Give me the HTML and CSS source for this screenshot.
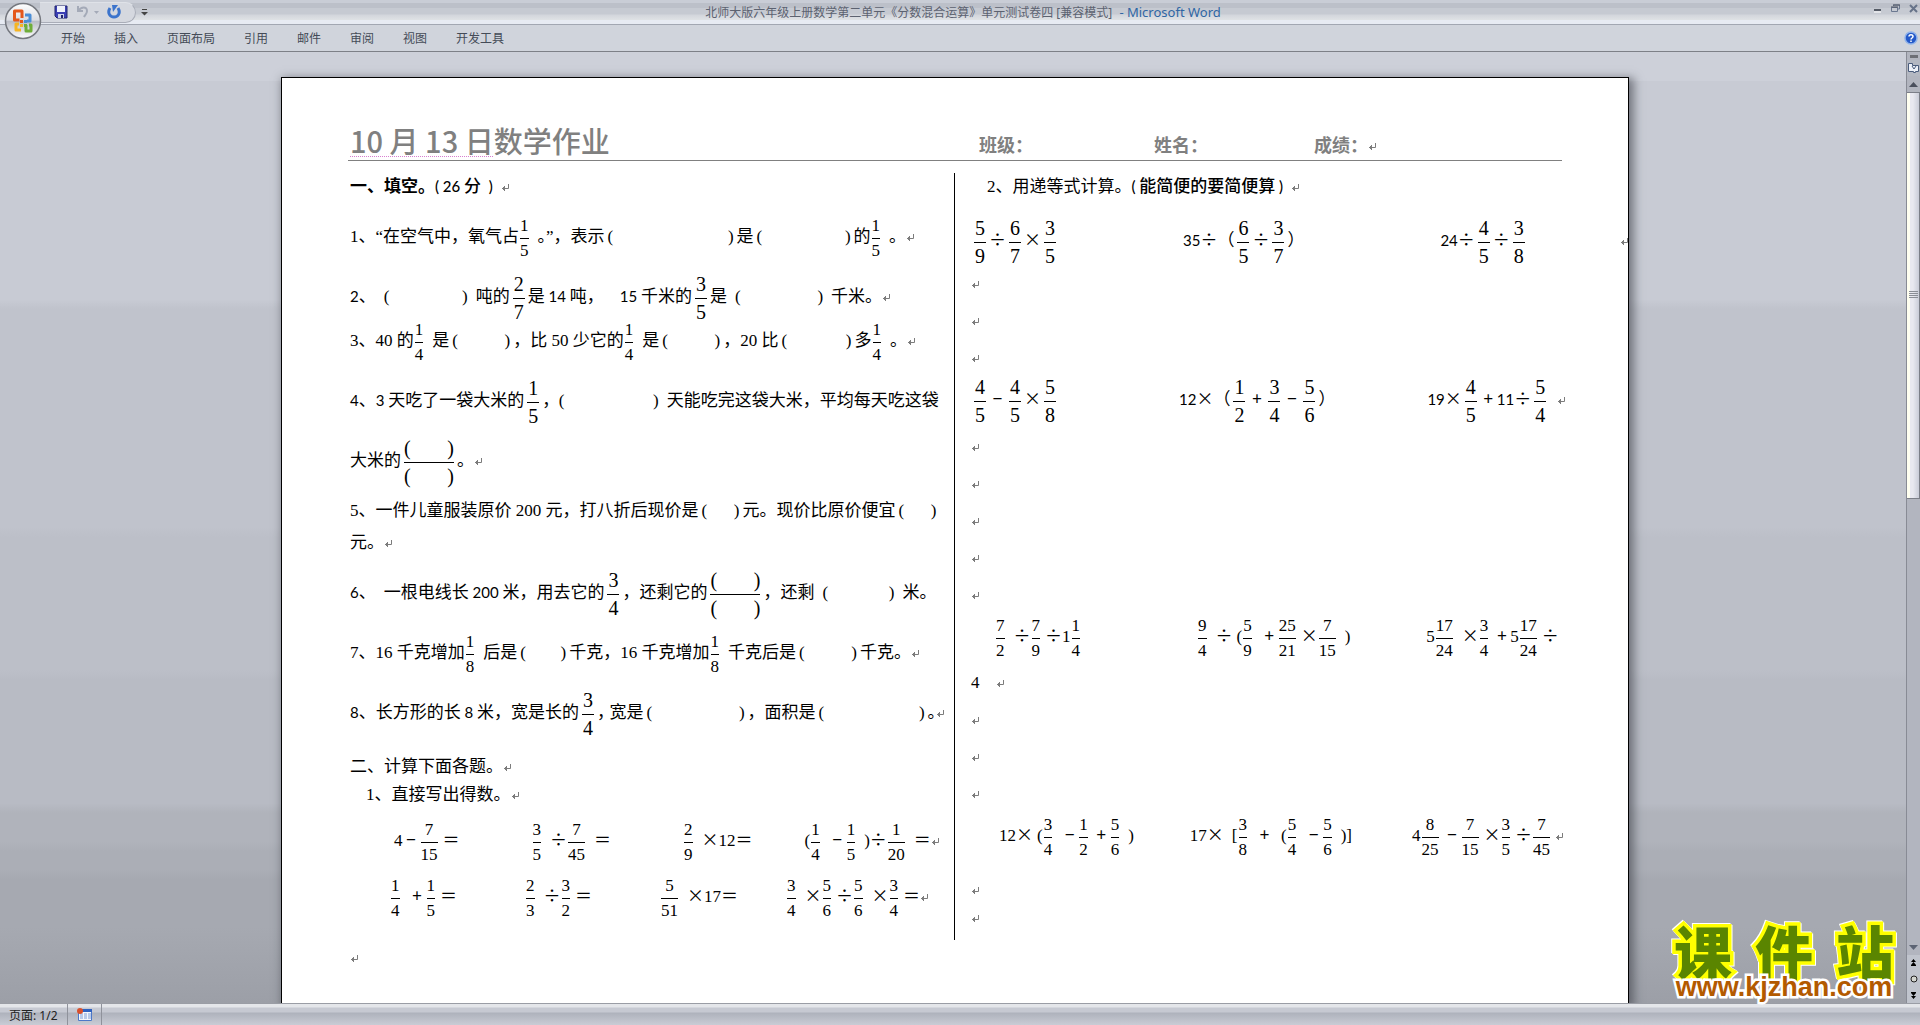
FILE: index.html
```html
<!DOCTYPE html>
<html lang="zh-CN">
<head>
<meta charset="utf-8">
<title>北师大版六年级上册数学第二单元《分数混合运算》单元测试卷四 - Microsoft Word</title>
<link rel="stylesheet" href="styles.css">
</head>
<body>
<svg class="defs" aria-hidden="true">
  <symbol id="ret" viewBox="0 0 9 8"><path d="M7.500 0v4.500H1M3.500 2v5M2.500 3v3M1.500 4v1" fill="none" stroke="#7c7c7c"/></symbol>
</svg>

<header class="titlebar">
  <div class="quick">
    <button type="button" aria-label="保存"><svg width="14" height="14" viewBox="0 0 14 14"><path d="M1 1h12v12H3L1 11z" fill="#3b3fb4" stroke="#20246e"/><path d="M3 1h8v6H3z" fill="#eef1fb"/><path d="M4 9h6v4H4z" fill="#cdd3ea"/><path d="M7 10h2v3H7z" fill="#20246e"/></svg></button>
    <button type="button" aria-label="撤消"><svg width="24" height="14" viewBox="0 0 24 14"><path d="M2 1v5h5M2.500 5.500C5 2 11 1 11 6c0 3-2 4-3 6" fill="none" stroke="#a4aab8" stroke-width="2"/><path d="M18 6h5l-2.500 3z" fill="#a4aab8"/></svg></button>
    <button type="button" aria-label="恢复"><svg width="14" height="14" viewBox="0 0 14 14"><path d="M3 3C0 8 3 12 7 12s7-4 4-9" fill="none" stroke="#3c74cc" stroke-width="3"/><path d="M5 0h6L6 7z" fill="#3c74cc"/></svg></button>
  </div>
  <button type="button" class="more" aria-label="自定义快速访问工具栏"><svg width="7" height="7" viewBox="0 0 7 7"><path d="M1 .500h5" stroke="#444"/><path d="M0 3h7L3.500 6.500z" fill="#444"/></svg></button>
  <h1 class="caption"><span>北师大版六年级上册数学第二单元《分数混合运算》单元测试卷四 [兼容模式]</span> <b>- Microsoft Word</b></h1>
  <div class="winbtns">
    <button type="button" aria-label="最小化"><svg width="9" height="9" viewBox="0 0 9 9"><path d="M1 6h7" stroke="#555b66" stroke-width="2"/><path d="M1 8h7" stroke="#fff"/></svg></button>
    <button type="button" aria-label="还原"><svg width="9" height="9" viewBox="0 0 9 9"><path d="M2.500 2V1h6v4h-2M.500 3.500h6v4h-6z" fill="none" stroke="#6b7890"/><path d="M2 1h7M0 3h7" stroke="#4c5260"/></svg></button>
    <button type="button" aria-label="关闭"><svg width="9" height="9" viewBox="0 0 9 9"><path d="M1 1l7 7M8 1L1 8" stroke="#667389" stroke-width="2"/></svg></button>
  </div>
</header>

<button type="button" class="office" aria-label="Office 按钮">
  <svg width="38" height="38" viewBox="0 0 38 38">
    <defs><linearGradient id="orb" x1="0" y1="0" x2="0" y2="1"><stop offset="0" stop-color="#fff"/><stop offset=".48" stop-color="#dadce2"/><stop offset=".5" stop-color="#b9bcc6"/><stop offset="1" stop-color="#fdfdfe"/></linearGradient></defs>
    <circle cx="19" cy="19" r="17.500" fill="url(#orb)" stroke="#75787f" stroke-width="1.500"/>
    <g fill="none" stroke-width="3" stroke-linejoin="round">
      <path d="M18 16v-7h-7.500v9h5" stroke="#e4571b"/>
      <path d="M21 13h5v6h-3" stroke="#4b8ed6"/>
      <path d="M17 28h-5v-6h3" stroke="#f6b522"/>
      <path d="M22 23v6h5v-6h-2" stroke="#6fae3a"/>
    </g>
    <path d="M16 18h3v3h-3z" fill="#e4571b"/><path d="M20 18h3v3h-3z" fill="#4b8ed6"/><path d="M16 22h3v3h-3z" fill="#f6b522"/><path d="M20 22h3v3h-3z" fill="#6fae3a"/>
  </svg>
</button>

<nav class="tabs">
  <button type="button">开始</button><button type="button">插入</button><button type="button">页面布局</button><button type="button">引用</button><button type="button">邮件</button><button type="button">审阅</button><button type="button">视图</button><button type="button">开发工具</button>
  <button type="button" class="help" aria-label="帮助"><svg width="14" height="14" viewBox="0 0 14 14"><circle cx="7" cy="7" r="6" fill="#2459c9" stroke="#8fb2ea" stroke-width="1.500"/><path d="M5 5.500C5 3 9 3 9 5.500 9 7 7 7 7 8.500M7 9.500V11" fill="none" stroke="#fff" stroke-width="1.500"/></svg></button>
</nav>

<div class="workspace">
<main class="canvas">
<article class="paper">
  <header class="pagehead">
    <h2><span class="smart">10 月 13 日</span>数学作业</h2><span>班级：</span><span>姓名：</span><span>成绩：<svg class="ret"><use href="#ret"/></svg></span>
  </header>
  <div class="columns">
    <section class="col left">
      <p><b>一、填空。</b><span class="cal semi">( 26 </span><span class="semi">分</span><i class="g g4"></i><span class="cal semi"> )</span><i class="g g8"></i><svg class="ret"><use href="#ret"/></svg></p>
      <p class="fr mt16">1、“在空气中，氧气占<span class="f"><i>1</i><i>5</i></span><i class="g g8"></i><i class="h">。</i>”，表示<span class="blank w132"><i>(</i><i>)</i></span>是<span class="blank w100"><i>(</i><i>)</i></span>的<span class="f"><i>1</i><i>5</i></span><i class="g g8"></i><i class="h">。</i><i class="g g8"></i><svg class="ret"><use href="#ret"/></svg></p>
      <p class="fr mt20"><span class="cal">2</span>、<span class="blank pad w100"><i>(</i><i>)</i></span>吨的<span class="f big"><i>2</i><i>7</i></span>是<span class="cal"> 14 </span>吨，<i class="g g16"></i><span class="cal">15 </span>千米的<span class="f big"><i>3</i><i>5</i></span>是<span class="blank pad w104"><i>(</i><i>)</i></span>千米。<svg class="ret"><use href="#ret"/></svg></p>
      <p class="fr mt4">3、40 的<span class="f"><i>1</i><i>4</i></span><i class="g g8"></i>是<span class="blank w64"><i>(</i><i>)</i></span>，比 50 少它的<span class="f"><i>1</i><i>4</i></span><i class="g g8"></i>是<span class="blank w64"><i>(</i><i>)</i></span>，20 比<span class="blank w76"><i>(</i><i>)</i></span>多<span class="f"><i>1</i><i>4</i></span><i class="g g8"></i><i class="h">。</i><i class="g g8"></i><svg class="ret"><use href="#ret"/></svg></p>
      <p class="fr mt20"><span class="cal">4</span>、<span class="cal">3 </span>天吃了一袋大米的<span class="f big"><i>1</i><i>5</i></span><i class="h">，</i><span class="blank pad w116"><i>(</i><i>)</i></span>天能吃完这袋大米，平均每天吃这袋</p>
      <p class="fr mt20">大米的<span class="f big wide"><i><b>(</b><b>)</b></i><i><b>(</b><b>)</b></i></span>。<svg class="ret"><use href="#ret"/></svg></p>
      <p class="mt16">5、一件儿童服装原价 200 元，打八折后现价是<span class="blank w44"><i>(</i><i>)</i></span>元。现价比原价便宜<span class="blank w44"><i>(</i><i>)</i></span></p>
      <p class="mt4">元。<svg class="ret"><use href="#ret"/></svg></p>
      <p class="fr mt16"><span class="cal">6</span>、<i class="g g8"></i>一根电线长<span class="cal"> 200 </span>米，用去它的<span class="f big"><i>3</i><i>4</i></span>，还剩它的<span class="f big wide"><i><b>(</b><b>)</b></i><i><b>(</b><b>)</b></i></span>，还剩<span class="blank pad w88"><i>(</i><i>)</i></span>米。</p>
      <p class="fr mt20">7、16 千克增加<span class="f"><i>1</i><i>8</i></span><i class="g g8"></i>后是<span class="blank w52"><i>(</i><i>)</i></span>千克，16 千克增加<span class="f"><i>1</i><i>8</i></span><i class="g g8"></i>千克后是<span class="blank w64"><i>(</i><i>)</i></span>千克。<svg class="ret"><use href="#ret"/></svg></p>
      <p class="fr mt20"><span class="cal">8</span>、长方形的长<span class="cal"> 8 </span>米，宽是长的<span class="f big"><i>3</i><i>4</i></span><i class="h">，</i><i class="g g4"></i>宽是<span class="blank w104"><i>(</i><i>)</i></span>，面积是<span class="blank w112"><i>(</i><i>)</i></span><i class="h">。</i><svg class="ret"><use href="#ret"/></svg></p>
      <p class="mt20">二、计算下面各题。<svg class="ret"><use href="#ret"/></svg></p>
      <p><i class="g g16"></i>1、直接写出得数。<svg class="ret"><use href="#ret"/></svg></p>
      <p class="fr mt12"><i class="g g44"></i>4<i class="op">−</i><span class="f"><i>7</i><i>15</i></span><i class="g g4"></i><i class="op">＝</i><i class="g g72"></i><span class="f"><i>3</i><i>5</i></span><i class="g g8"></i><i class="op">÷</i><span class="f"><i>7</i><i>45</i></span><i class="g g8"></i><i class="op">＝</i><i class="g g72"></i><span class="f"><i>2</i><i>9</i></span><i class="g g8"></i><i class="op">×</i>12<i class="op">＝</i><i class="g g52"></i>(<span class="f"><i>1</i><i>4</i></span><i class="g g8"></i><i class="op">−</i><span class="f"><i>1</i><i>5</i></span><i class="g g8"></i>)<i class="op">÷</i><span class="f"><i>1</i><i>20</i></span><i class="g g8"></i><i class="op">＝</i><svg class="ret"><use href="#ret"/></svg></p>
      <p class="fr mt16"><i class="g g40"></i><span class="f"><i>1</i><i>4</i></span><i class="g g8"></i><i class="op">+</i><span class="f"><i>1</i><i>5</i></span><i class="g g4"></i><i class="op">＝</i><i class="g g68"></i><span class="f"><i>2</i><i>3</i></span><i class="g g8"></i><i class="op">÷</i><span class="f"><i>3</i><i>2</i></span><i class="g g4"></i><i class="op">＝</i><i class="g g68"></i><span class="f"><i>5</i><i>51</i></span><i class="g g8"></i><i class="op">×</i>17<i class="op">＝</i><i class="g g48"></i><span class="f"><i>3</i><i>4</i></span><i class="g g8"></i><i class="op">×</i><span class="f"><i>5</i><i>6</i></span><i class="g g4"></i><i class="op">÷</i><span class="f"><i>5</i><i>6</i></span><i class="g g8"></i><i class="op">×</i><span class="f"><i>3</i><i>4</i></span><i class="g g4"></i><i class="op">＝</i><svg class="ret"><use href="#ret"/></svg></p>
    </section>
    <section class="col right">
      <p><i class="g g16"></i>2、用递等式计算。<span class="cal semi">( </span><span class="semi">能简便的要简便算</span><span class="cal semi"> )</span><i class="g g8"></i><svg class="ret"><use href="#ret"/></svg></p>
      <p class="fr mt20"><span class="f big"><i>5</i><i>9</i></span><i class="op">÷</i><span class="f big"><i>6</i><i>7</i></span><i class="op">×</i><span class="f big"><i>3</i><i>5</i></span><i class="g g124"></i><span class="cal">35</span><i class="op">÷</i>（<span class="f big"><i>6</i><i>5</i></span><i class="op">÷</i><span class="f big"><i>3</i><i>7</i></span>）<i class="g g136"></i><span class="cal">24</span><i class="op">÷</i><span class="f big"><i>4</i><i>5</i></span><i class="op">÷</i><span class="f big"><i>3</i><i>8</i></span><i class="g g92"></i><svg class="ret"><use href="#ret"/></svg></p>
      <p class="empty mt4"><svg class="ret"><use href="#ret"/></svg></p>
      <p class="empty"><svg class="ret"><use href="#ret"/></svg></p>
      <p class="empty"><svg class="ret"><use href="#ret"/></svg></p>
      <p class="fr mt4"><span class="f big"><i>4</i><i>5</i></span><i class="op">−</i><span class="f big"><i>4</i><i>5</i></span><i class="op">×</i><span class="f big"><i>5</i><i>8</i></span><i class="g g120"></i><span class="cal">12</span><i class="op">×</i>（<span class="f big"><i>1</i><i>2</i></span><i class="op">+</i><span class="f big"><i>3</i><i>4</i></span><i class="op">−</i><span class="f big"><i>5</i><i>6</i></span>）<i class="g g92"></i><span class="cal">19</span><i class="op">×</i><span class="f big"><i>4</i><i>5</i></span><i class="op">+</i><span class="cal">11</span><i class="op">÷</i><span class="f big"><i>5</i><i>4</i></span><i class="g g8"></i><svg class="ret"><use href="#ret"/></svg></p>
      <p class="empty mt8"><svg class="ret"><use href="#ret"/></svg></p>
      <p class="empty"><svg class="ret"><use href="#ret"/></svg></p>
      <p class="empty"><svg class="ret"><use href="#ret"/></svg></p>
      <p class="empty"><svg class="ret"><use href="#ret"/></svg></p>
      <p class="empty"><svg class="ret"><use href="#ret"/></svg></p>
      <p class="fr mt4"><i class="g g24"></i><span class="f"><i>7</i><i>2</i></span><i class="g g8"></i><i class="op">÷</i><span class="f"><i>7</i><i>9</i></span><i class="g g4"></i><i class="op">÷</i>1<span class="f"><i>1</i><i>4</i></span><i class="g g116"></i><span class="f"><i>9</i><i>4</i></span><i class="g g8"></i><i class="op">÷</i><i class="g g4"></i>(<span class="f"><i>5</i><i>9</i></span><i class="g g8"></i><i class="op">+</i><span class="f"><i>25</i><i>21</i></span><i class="g g4"></i><i class="op">×</i><span class="f"><i>7</i><i>15</i></span><i class="g g8"></i>)<i class="g g76"></i>5<span class="f"><i>17</i><i>24</i></span><i class="g g8"></i><i class="op">×</i><span class="f"><i>3</i><i>4</i></span><i class="g g4"></i><i class="op">+</i>5<span class="f"><i>17</i><i>24</i></span><i class="g g4"></i><i class="op">÷</i></p>
      <p class="mt12">4<i class="g g16"></i><svg class="ret"><use href="#ret"/></svg></p>
      <p class="empty mt4"><svg class="ret"><use href="#ret"/></svg></p>
      <p class="empty"><svg class="ret"><use href="#ret"/></svg></p>
      <p class="empty"><svg class="ret"><use href="#ret"/></svg></p>
      <p class="fr mt4"><i class="g g28"></i>12<i class="op">×</i><i class="g g4"></i>(<span class="f"><i>3</i><i>4</i></span><i class="g g8"></i><i class="op">−</i><span class="f"><i>1</i><i>2</i></span><i class="g g4"></i><i class="op">+</i><span class="f"><i>5</i><i>6</i></span><i class="g g8"></i>)<i class="g g56"></i>17<i class="op">×</i><i class="g g8"></i>[<span class="f"><i>3</i><i>8</i></span><i class="g g8"></i><i class="op">+</i><i class="g g8"></i>(<span class="f"><i>5</i><i>4</i></span><i class="g g8"></i><i class="op">−</i><span class="f"><i>5</i><i>6</i></span><i class="g g8"></i>)]<i class="g g60"></i>4<span class="f"><i>8</i><i>25</i></span><i class="g g4"></i><i class="op">−</i><span class="f"><i>7</i><i>15</i></span><i class="g g4"></i><i class="op">×</i><span class="f"><i>3</i><i>5</i></span><i class="g g4"></i><i class="op">÷</i><span class="f"><i>7</i><i>45</i></span><i class="g g4"></i><svg class="ret"><use href="#ret"/></svg></p>
      <p class="mt20"><svg class="ret"><use href="#ret"/></svg></p>
      <p><svg class="ret"><use href="#ret"/></svg></p>
    </section>
  </div>
  <p class="after mt4"><svg class="ret"><use href="#ret"/></svg></p>
</article>
</main>

<aside class="scroll">
  <div class="split"></div>
  <button type="button" class="ruler" aria-label="标尺"><svg width="13" height="12" viewBox="0 0 13 12"><path d="M1.500 1.500h4v2h6v6h-3v1h-2v-1h-5z" fill="#eef1f8" stroke="#4a5c7c"/><path d="M5 4l2 3 2-3" fill="none" stroke="#4a5c7c"/></svg></button>
  <button type="button" class="arrow" aria-label="向上"><svg width="9" height="5" viewBox="0 0 9 5"><path d="M0 5h9L4.500 0z" fill="#4a4f5c"/></svg></button>
  <div class="track"><div class="thumb"><svg width="9" height="8" viewBox="0 0 9 8"><path d="M0 .500h9M0 2.500h9M0 4.500h9M0 6.500h9" stroke="#8a8d96"/></svg></div></div>
  <button type="button" class="arrow" aria-label="向下"><svg width="9" height="5" viewBox="0 0 9 5"><path d="M0 0h9L4.500 5z" fill="#5d6474"/></svg></button>
  <div class="browse">
    <button type="button" aria-label="前一页"><svg width="7" height="7" viewBox="0 0 7 7"><path d="M3.500 0L6 3H1zM3.500 3L6 6H1zM1 6h5v1H1z"/></svg></button>
    <button type="button" aria-label="选择浏览对象"><svg width="8" height="8" viewBox="0 0 8 8"><circle cx="4" cy="4" r="3" fill="#d4d6d0" stroke="#222"/></svg></button>
    <button type="button" aria-label="下一页"><svg width="7" height="7" viewBox="0 0 7 7"><path d="M1 0h5v1H1zM1 1h5L3.500 4zM1 4h5L3.500 7z"/></svg></button>
  </div>
</aside>

<div class="brand">
  <div class="brandname"><span>课</span><span>件</span><span>站</span></div>
  <a href="#">www.kjzhan.com</a>
</div>
</div>

<footer class="status">
  <button type="button">页面: 1/2</button>
  <button type="button" aria-label="宏"><svg width="15" height="13" viewBox="0 0 15 13"><path d="M1.500 1.500h13v11h-13z" fill="#f4f7fd" stroke="#4c78c8"/><path d="M1 1h14v3H1z" fill="#2f62c0"/><path d="M3 6h3M7 6h3M11 6h3M3 8h3M7 8h3M11 8h3M3 10h3M7 10h3M11 10h3" stroke="#7d9ed8"/><circle cx="3" cy="3" r="3" fill="#d9502c"/></svg></button>
</footer>
</body>
</html>
```
FILE: styles.css
```css
* { box-sizing: border-box; }
body {
  margin: 0;
  min-height: 100vh;
  display: flex;
  flex-direction: column;
  position: relative;
  overflow-x: hidden;
  background: #cdd1da;
  font-family: "Noto Sans", "Noto Sans CJK SC", sans-serif;
  font-size: 12px;
  color: #444b57;
}
button { border: 0; padding: 0; background: none; font: inherit; color: inherit; display: flex; align-items: center; justify-content: center; }
p, h1, h2 { margin: 0; font-weight: inherit; }
i { font-style: normal; }
svg { flex: none; }
.defs { position: absolute; width: 0; height: 0; }

/* window frame */
.titlebar {
  height: 25px;
  display: flex;
  align-items: center;
  background: linear-gradient(#c9cdd6 0 3px, #bcc0c9 3px 8px, #c6cad2 8px 14px, #d3d6dc 15px, #dfe2e5 20px, #e7ebf3 20px);
  border-bottom: 1px solid #a2a7b2;
}
.quick {
  width: 96px;
  height: 21px;
  margin-left: 40px;
  padding: 0 14px;
  display: flex;
  align-items: center;
  justify-content: space-between;
  border: 1px solid #a9adb8;
  border-top-color: #dfe2e8;
  border-left: 0;
  border-radius: 0 11px 11px 0;
  background: #d5d8df;
}
.more { width: 16px; }
.caption { flex: 1; text-align: center; font-size: 12px; line-height: 24px; color: #5c6270; padding-right: 22px; white-space: nowrap; }
.caption b { font-weight: 400; font-size: 13px; color: #2f66a4; padding-left: 4px; }
.winbtns { display: flex; gap: 9px; padding: 0 2px 8px 0; width: 124px; justify-content: flex-end; }
.office { position: absolute; left: 4px; top: 2px; }
.tabs { height: 27px; display: flex; align-items: center; padding: 0 2px 0 46px; background: #d0d4dc; border-bottom: 1px solid #7d8087; }
.tabs button { padding: 0 14px 0 15px; height: 26px; }
.tabs .help { margin-left: auto; padding: 0; }

/* document area */
.workspace {
  flex: 1;
  display: flex;
  position: relative;
  background: linear-gradient(#cdd0d9 0 3%, #c8cbd4 3% 26%, #c0c3cc 27% 50%, #bcbfc8 51% 65%, #b8bbc4 66% 79%, #b0b3bb 80% 83%, #abaeb6 84% 86%, #a6a9b1 87% 92%, #9c9fa7);
}
.canvas { flex: 1; min-width: 0; padding: 25px 0 0 4px; display: flex; justify-content: center; overflow: hidden; }
.paper {
  width: 1348px;
  max-width: 100%;
  padding: 44px 66px 0;
  border: 1px solid #000;
  border-bottom: 0;
  background: #fff;
  box-shadow: 3px 3px 9px 2px rgba(60, 62, 70, .6);
  color: #000;
  font: 400 17px/28px "Liberation Serif", "Noto Sans CJK SC", serif;
  overflow: hidden;
}
.pagehead {
  display: grid;
  grid-template-columns: 629px 175px 160px auto;
  align-items: end;
  padding: 0 0 2px 2px;
  border-bottom: 1px solid #808080;
  color: #808080;
  font: 700 18px/28px "Noto Sans CJK SC", sans-serif;
}
.pagehead h2 { font-size: 29px; line-height: 36px; font-weight: 500; }
.smart { text-decoration: underline dotted #d77fd0 1px; text-underline-offset: 3px; }
.columns { display: grid; grid-template-columns: 607px 1fr; margin-top: 12px; }
.col { padding-bottom: 8px; white-space: nowrap; min-width: 0; }
.left { padding-left: 2px; border-right: 1px solid #000; }
.right { padding-left: 16px; }
.after { padding-left: 2px; }
.fr { line-height: 40px; height: 40px; }
.empty { line-height: 37px; }
.mt4 { margin-top: 4px; }
.mt8 { margin-top: 8px; }
.mt12 { margin-top: 12px; }
.mt16 { margin-top: 16px; }
.mt20 { margin-top: 20px; }
.ret { width: 9px; height: 8px; vertical-align: middle; }
.cal { font-family: Lato, sans-serif; font-size: 15px; font-weight: 400; line-height: 20px; white-space: pre; }
.semi { font-weight: 500; }
.h { font-feature-settings: "halt"; }
.op { display: inline-block; width: 17px; text-align: center; font-family: "Noto Sans CJK SC", sans-serif; line-height: 20px; }

/* fractions */
.f { display: inline-flex; flex-direction: column; vertical-align: middle; margin: -8px 1px; text-align: center; line-height: 24px; }
.f > i:first-child { border-bottom: 1px solid #000; }
.big { margin: -10px 3px; min-width: 12px; font-size: 20px; line-height: 27px; }
.wide { width: 50px; }
.wide > i { display: flex; justify-content: space-between; }
.wide b { font-weight: 400; }

/* answer blanks */
.blank { display: inline-flex; justify-content: space-between; padding: 0 3px; line-height: 20px; }
.pad { padding: 0 8px; }
.w44 { width: 44px; }
.w52 { width: 52px; }
.w64 { width: 64px; }
.w76 { width: 76px; }
.w88 { width: 88px; }
.w100 { width: 100px; }
.w104 { width: 104px; }
.w112 { width: 112px; }
.w116 { width: 116px; }
.w132 { width: 132px; }

/* runs of spaces */
.g { display: inline-block; }
.g4 { width: 4px; }
.g8 { width: 8px; }
.g16 { width: 16px; }
.g24 { width: 24px; }
.g28 { width: 28px; }
.g40 { width: 40px; }
.g44 { width: 44px; }
.g48 { width: 48px; }
.g52 { width: 52px; }
.g56 { width: 56px; }
.g60 { width: 60px; }
.g68 { width: 68px; }
.g72 { width: 72px; }
.g76 { width: 76px; }
.g92 { width: 92px; }
.g116 { width: 116px; }
.g120 { width: 120px; }
.g124 { width: 124px; }
.g136 { width: 136px; }

/* scroll bar */
.scroll { width: 14px; display: flex; flex-direction: column; align-items: stretch; background: #b2b5bf; border-left: 1px solid #888b95; }
.split { height: 3px; margin: 3px 2px 2px 3px; background: #6d6f76; }
.ruler { height: 16px; background: #b4b8c2; }
.arrow { height: 16px; }
.track { flex: 1; }
.thumb { height: 48%; display: flex; align-items: center; justify-content: center; border: 1px solid #7b7e88; border-left: 0; background: linear-gradient(90deg, #fffff0 0 3px, #e8e8f0 3px 6px, #c9ccd8); }
.browse { display: flex; flex-direction: column; justify-content: space-around; height: 48px; background: #c0c4cd; }

/* site mark */
.brand { position: absolute; right: 20px; bottom: 0; width: 232px; }
.brandname { display: flex; justify-content: space-between; font: 900 58px/42px "Noto Sans CJK SC", sans-serif; color: #5a8500; -webkit-text-stroke: 7px #ff0; paint-order: stroke fill; filter: drop-shadow(1px 1px 0 #fff) drop-shadow(-1px -1px 0 #fff); padding: 0 6px; }
.brand a { display: block; position: relative; text-align: center; font: 700 27px/32px "Liberation Sans", sans-serif; color: #b35a00; text-decoration: none; -webkit-text-stroke: 5px #fff; paint-order: stroke fill; }

/* status bar */
.status { height: 22px; display: flex; border-top: 1px solid #9a9da5; background: linear-gradient(#e4e6ea 0 3px, #c6c9d2 4px 8px, #aeb2bc 9px, #c9ccd5); color: #222; }
.status button { padding: 0 9px; border-right: 1px solid #8f929b; }
```
